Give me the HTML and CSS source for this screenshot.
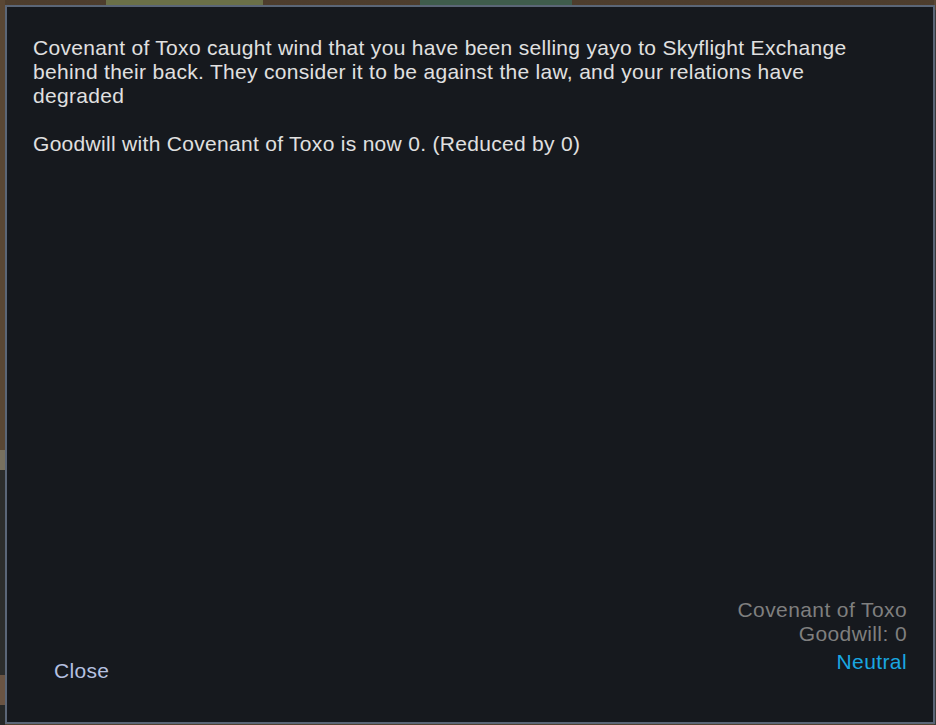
FILE: index.html
```html
<!DOCTYPE html>
<html lang="en">
<head>
<meta charset="utf-8">
<title>Letter</title>
<link rel="stylesheet" href="styles.css">
</head>
<body>
<div class="dialog">
  <div class="message">
    <p>Covenant of Toxo caught wind that you have been selling yayo to Skyflight Exchange behind their back. They consider it to be against the law, and your relations have degraded</p>
    <p>Goodwill with Covenant of Toxo is now 0. (Reduced by 0)</p>
  </div>
  <div class="footer">
    <button class="close" type="button">Close</button>
    <div class="faction">
      <div class="faction-name">Covenant of Toxo</div>
      <div class="faction-goodwill">Goodwill: 0</div>
      <div class="faction-status">Neutral</div>
    </div>
  </div>
</div>
</body>
</html>
```
FILE: styles.css
```css
html, body {
  margin: 0;
  height: 100%;
}
body {
  background-color: #5a4734;
  background-image:
    linear-gradient(to right, transparent 106px, #6b7048 106px, #6b7048 263px, transparent 263px, transparent 420px, #3f5c4c 420px, #3f5c4c 572px, transparent 572px),
    linear-gradient(to bottom, #5a4734 0, #5a4734 450px, #77705f 450px, #77705f 470px, #2c2d2c 470px, #2c2d2c 675px, #6a5443 675px, #6a5443 705px, #262828 705px),
    linear-gradient(to bottom, #5a4734 0, #5a4734 10px, #383a3b 10px),
    linear-gradient(to bottom, #4d3d2d, #5e4a36 40%, #53412f);
  background-size: 100% 6px, 5px 100%, 2px 100%, 100% 100%;
  background-position: 0 0, 0 0, right 0 top 0, 0 0;
  background-repeat: no-repeat;
  font-family: "Liberation Sans", Arial, sans-serif;
  overflow: hidden;
}
.dialog {
  box-sizing: border-box;
  margin: 5px 1px 0 5px;
  height: 719px;
  border: 2px solid #5b6677;
  background: #16191e;
  display: flex;
  flex-direction: column;
  padding: 29px 26px 40px 26px;
}
.message {
  flex: 1;
  padding-right: 40px;
  color: #e0e0e0;
  font-size: 21px;
  line-height: 24px;
  letter-spacing: 0.3px;
}
.message p {
  margin: 0 0 24px 0;
}
.footer {
  display: flex;
  justify-content: space-between;
  align-items: flex-end;
}
.close {
  background: none;
  border: none;
  padding: 0;
  margin: 0 0 0 21px;
  font-family: inherit;
  font-size: 21px;
  line-height: 24px;
  letter-spacing: 0.3px;
  color: #b5c1e0;
  cursor: pointer;
  position: relative;
  top: 1px;
}
.faction {
  text-align: right;
  font-size: 21px;
  line-height: 24px;
  letter-spacing: 0.4px;
  color: #7f7f7f;
  padding-bottom: 8px;
}
.faction-status {
  color: #19a7e1;
  margin-top: 4px;
}
```
